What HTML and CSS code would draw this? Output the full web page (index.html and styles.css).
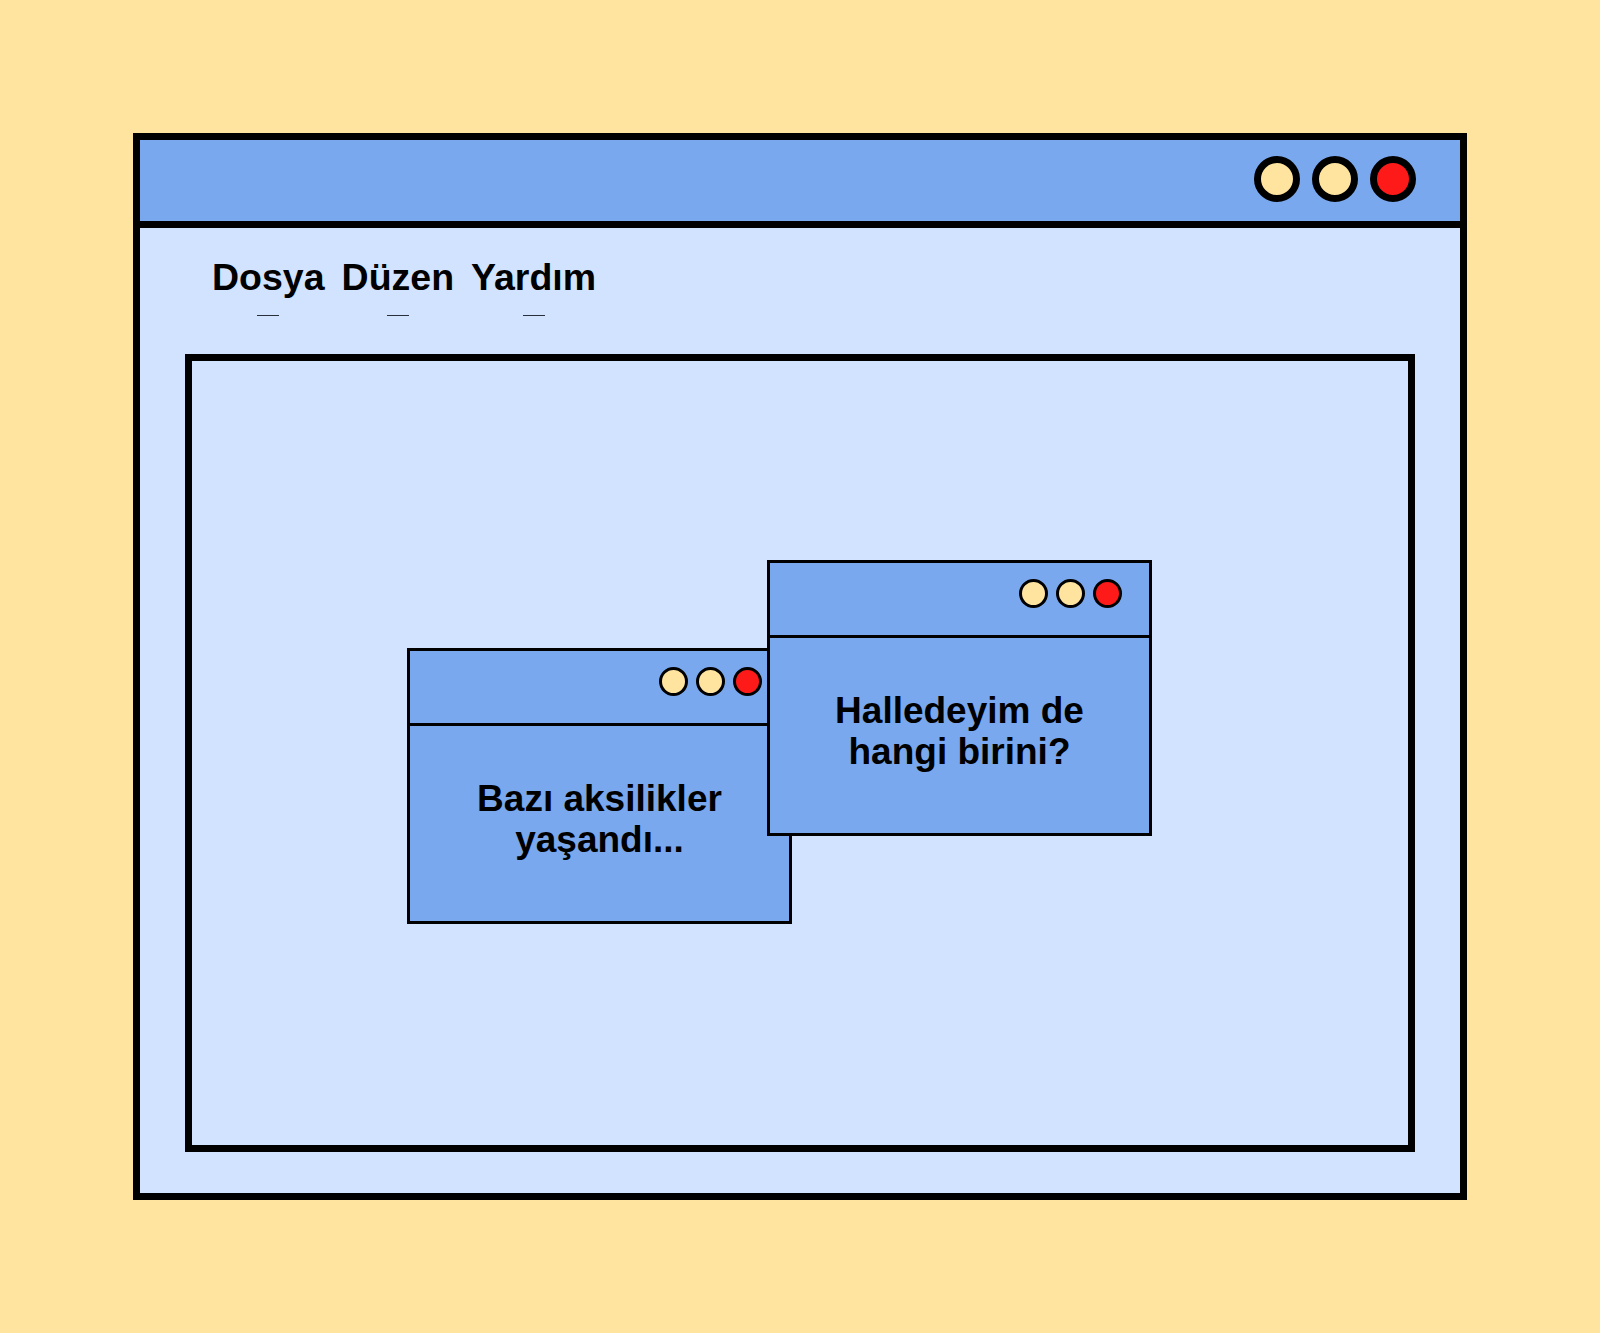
FILE: index.html
```html
<!DOCTYPE html>
<html lang="tr">

<head>
	<meta charset="UTF-8">
	<meta name="viewport" content="width=device-width, initial-scale=1.0">
	<title>Hangi pencere?</title>
	<link rel="stylesheet" href="styles.css">
</head>

<body>
	<main class="desk">
		<div class="window">
			<div class="titlebar">
				<span class="dot"></span>
				<span class="dot"></span>
				<span class="dot dot-close"></span>
			</div>
			<div class="content">
				<nav class="menu">
					<div class="menu-item">Dosya<span class="dash"></span></div>
					<div class="menu-item">Düzen<span class="dash"></span></div>
					<div class="menu-item">Yardım<span class="dash"></span></div>
				</nav>
				<div class="frame">
					<!-- windows sit on the frame like on a desktop -->
					<div class="dialog dialog-back">
						<div class="dialog-bar">
							<span class="dot"></span>
							<span class="dot"></span>
							<span class="dot dot-close"></span>
						</div>
						<div class="dialog-body">
							<p>Bazı aksilikler<br>yaşandı...</p>
						</div>
					</div>
					<div class="dialog dialog-front">
						<div class="dialog-bar">
							<span class="dot"></span>
							<span class="dot"></span>
							<span class="dot dot-close"></span>
						</div>
						<div class="dialog-body">
							<p>Halledeyim de<br>hangi birini?</p>
						</div>
					</div>
				</div>
			</div>
		</div>
	</main>
</body>

</html>
```

FILE: styles.css
```css
* {
	margin: 0;
	padding: 0;
	box-sizing: border-box;
}

body {
	background-color: #FFE4A0;
	font-family: "Liberation Sans", Arial, sans-serif;
	color: #000;
}

.desk {
	min-height: 100vh;
	display: flex;
	justify-content: center;
	align-items: center;
}

.window {
	width: 1334px;
	height: 1067px;
	border: 7px solid #000;
	background-color: #D1E3FF;
	display: flex;
	flex-direction: column;
}

.titlebar {
	height: 88px;
	flex-shrink: 0;
	background-color: #79A8EF;
	border-bottom: 7px solid #000;
	display: flex;
	justify-content: flex-end;
	align-items: center;
	gap: 12px;
	padding: 0 44px 3px 0;
}

.dot {
	display: block;
	width: 46px;
	height: 46px;
	border-radius: 50%;
	border: 7px solid #000;
	background-color: #FFE4A0;
}

.dot-close {
	background-color: #FF1A1A;
}

.content {
	padding: 29px 45px 0;
}

.menu {
	display: flex;
	gap: 17px;
	padding-left: 27px;
}

.menu-item {
	display: flex;
	flex-direction: column;
	align-items: center;
	font-size: 37.5px;
	font-weight: bold;
	line-height: 40px;
}

.dash {
	display: block;
	width: 22px;
	height: 1px;
	margin-top: 18px;
	background-color: #2a2f3c;
}

.frame {
	position: relative;
	height: 798px;
	margin-top: 38px;
	border: 7px solid #000;
}

.dialog {
	position: absolute;
	width: 385px;
	height: 276px;
	border: 3px solid #000;
	background-color: #79A8EF;
	display: flex;
	flex-direction: column;
}

.dialog-back {
	left: 215px;
	top: 287px;
}

.dialog-front {
	left: 575px;
	top: 199px;
}

.dialog-bar {
	height: 75px;
	flex-shrink: 0;
	border-bottom: 3px solid #000;
	display: flex;
	justify-content: flex-end;
	align-items: center;
	gap: 8px;
	padding: 0 27px 12px 0;
}

.dialog-bar .dot {
	width: 29px;
	height: 29px;
	border-width: 3px;
}

.dialog-body {
	flex: 1;
	display: flex;
	justify-content: center;
	align-items: center;
	padding-bottom: 10px;
	text-align: center;
	font-size: 37px;
	font-weight: bold;
	line-height: 41px;
}
```
